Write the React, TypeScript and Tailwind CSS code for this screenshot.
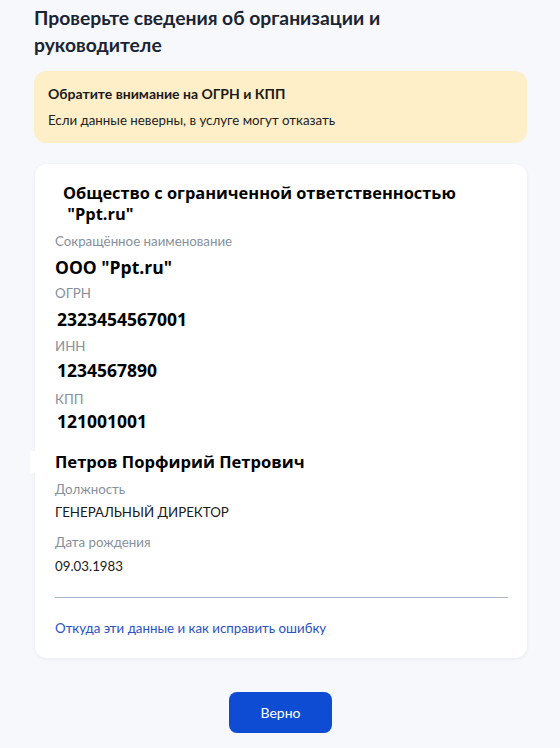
const org = [
  { label: "ОГРН", value: "2323454567001", lm: "mt-[6px]", vm: "mt-[6px]" },
  { label: "ИНН", value: "1234567890", lm: "mt-[7px]", vm: "mt-[4px]" },
  { label: "КПП", value: "121001001", lm: "mt-[9px]", vm: "mt-[2px]" },
];

function Label({ children, className = "" }: { children: React.ReactNode; className?: string }) {
  return <div className={`text-[13.3px] leading-[18px] text-[#86909c] ${className}`}>{children}</div>;
}

export default function App() {
  return (
    <div className="min-h-[748px] w-[560px] bg-[#f6f8fc] pl-[34px] pr-[33px] pt-[4px] pb-[15px] font-['Lato','Noto_Sans',sans-serif] text-[#0b1f33]">
      <h1 className="max-w-[380px] text-[19.3px] leading-[27px] font-bold text-[#1a2433]">
        Проверьте сведения об организации и руководителе
      </h1>

      <div className="mt-[13px] rounded-[12px] bg-[#feefc8] px-[14px] pt-[13px] pb-[14px]">
        <div className="text-[14px] leading-[20px] font-bold text-[#1a1a1a]">Обратите внимание на ОГРН и КПП</div>
        <div className="mt-[7px] text-[13.3px] leading-[18px] text-[#222]">Если данные неверны, в услуге могут отказать</div>
      </div>

      <div className="mt-[21px] ml-[1px] rounded-[12px] bg-white pl-[20px] pr-[19px] pt-[18px] pb-[21px] shadow-[0_1px_4px_rgba(0,30,90,0.06)]">
        <div className="pl-[8px] font-['Open_Sans',sans-serif] text-[16.4px] leading-[21px] font-bold text-black">
          Общество с ограниченной ответственностью
          <br />
          &nbsp;"Ppt.ru"
        </div>
        <Label className="mt-[8px]">Сокращённое наименование</Label>
        <div className="mt-[6px] font-['Open_Sans',sans-serif] text-[17.5px] leading-[22px] font-bold text-black">ООО "Ppt.ru"</div>
        {org.map((f) => (
          <div key={f.label}>
            <Label className={f.lm}>{f.label}</Label>
            <div className={`${f.vm} pl-[2px] font-['Open_Sans',sans-serif] text-[17.5px] leading-[22px] font-bold text-black`}>
              {f.value}
            </div>
          </div>
        ))}

        <div className="mt-[19px] -ml-[25px] w-fit bg-white pl-[25px] pr-[6px] font-['Open_Sans',sans-serif] text-[16.6px] leading-[22px] font-bold text-black">
          Петров Порфирий Петрович
        </div>
        <Label className="mt-[7px]">Должность</Label>
        <div className="mt-[5px] text-[13.3px] leading-[18px] text-[#1a1a1a]">ГЕНЕРАЛЬНЫЙ ДИРЕКТОР</div>
        <Label className="mt-[12px]">Дата рождения</Label>
        <div className="mt-[6px] text-[13.3px] leading-[18px] text-[#1a1a1a]">09.03.1983</div>

        <div className="mt-[22px] h-px bg-[#a9b8cc]" />
        <a href="#" className="mt-[21px] block text-[13.3px] leading-[18px] text-[#2b52c2]">
          Откуда эти данные и как исправить ошибку
        </a>
      </div>

      <div className="mt-[34px] flex justify-center">
        <button className="h-[41px] w-[103px] rounded-[8px] bg-[#0d4cd3] text-[14px] text-white">Верно</button>
      </div>
    </div>
  );
}
